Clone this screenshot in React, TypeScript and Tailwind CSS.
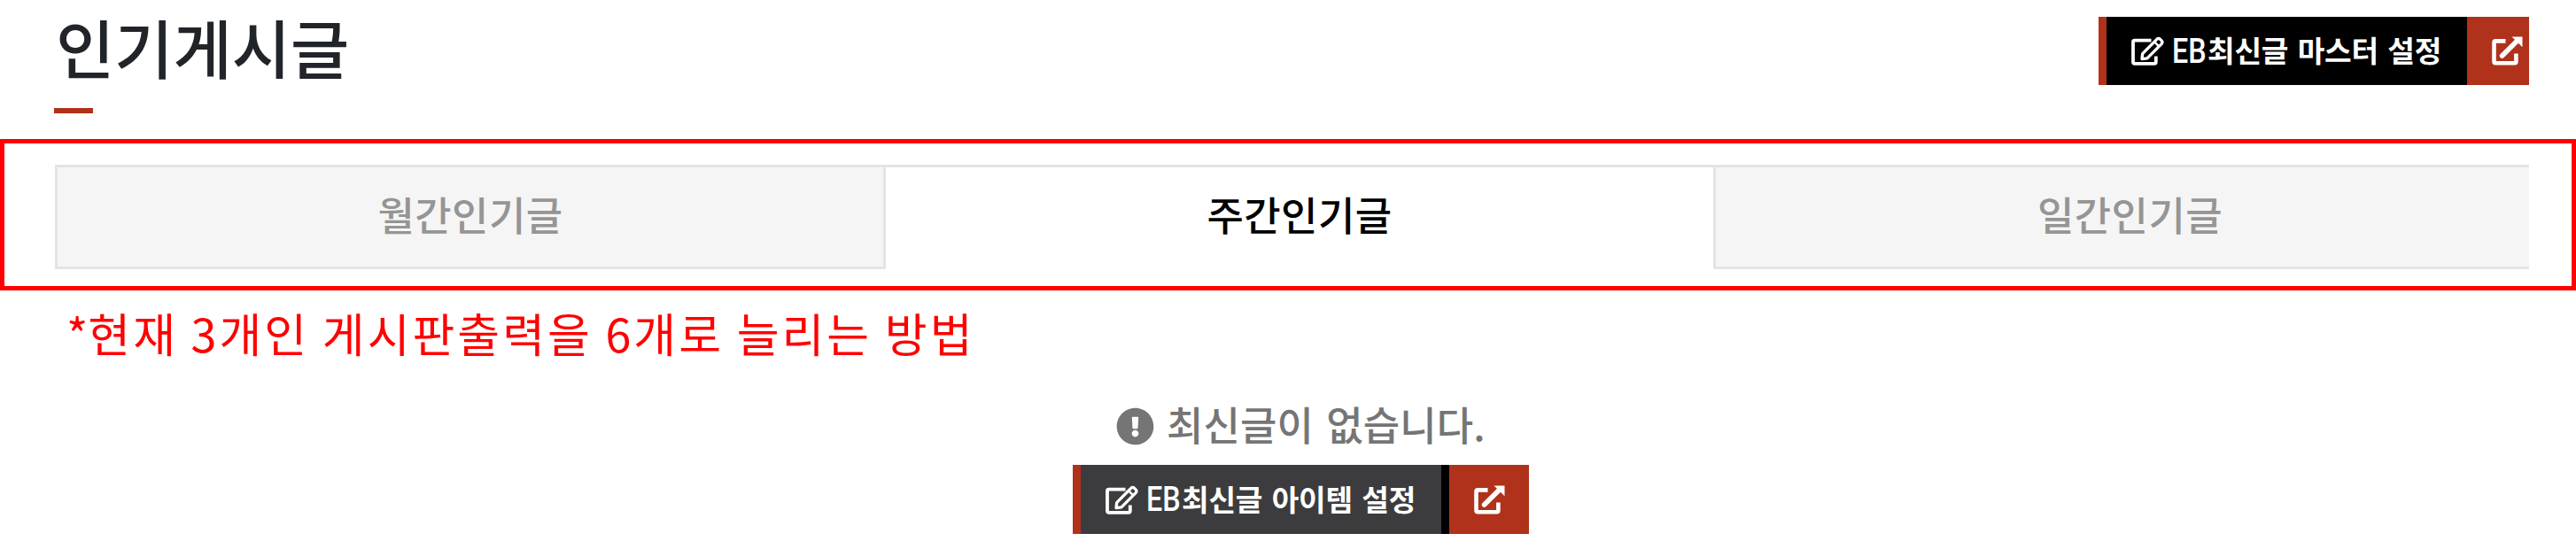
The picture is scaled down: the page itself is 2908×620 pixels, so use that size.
import { FaExclamationCircle } from "react-icons/fa";

const tabs = [
  { label: "월간인기글", active: false },
  { label: "주간인기글", active: true },
  { label: "일간인기글", active: false },
];

function EditIcon() {
  return (
    <svg viewBox="0 0 37 33" className="h-[33px] w-[37px] shrink-0" fill="none" stroke="currentColor" strokeLinejoin="round">
      <path d="M22.5 4.7H3.8Q2 4.7 2 6.500V29Q2 30.800 3.800 30.800H26Q27.800 30.800 27.800 29V22.500" strokeWidth="3.800" />
      <path d="M12 25.600L12.700 19.700L28.800 3.300Q30.700 1.400 32.600 3.300L34.100 4.800Q36 6.700 34.100 8.600L17.900 24.900Z" strokeWidth="3.300" />
      <path d="M26 6.200L31.200 11.400" strokeWidth="2.600" />
    </svg>
  );
}

function ExternalIcon() {
  return (
    <svg viewBox="0 0 35 33" className="h-[33px] w-[35px] shrink-0" fill="none" stroke="currentColor">
      <path d="M15.500 5.400H4.200Q2.500 5.400 2.500 7.100V28.600Q2.500 30.300 4.200 30.300H25.700Q27.400 30.300 27.400 28.600V19.500" strokeWidth="4.600" strokeLinejoin="round" />
      <path d="M11.600 22L28.500 5.200" strokeWidth="5.600" strokeLinecap="round" />
      <path d="M22.500 0.500H34.500V12.200Z" fill="currentColor" stroke="none" />
    </svg>
  );
}

function SettingsLabel({ text }: { text: string }) {
  return (
    <span className="ml-[9px] flex items-center whitespace-nowrap leading-[40px]">
      <span className="w-[40px] origin-left scale-x-[0.85] font-['Roboto',sans-serif] text-[38px] font-medium">EB</span>
      <span className="-mt-[3px] text-[33.3px] font-bold tracking-[-0.2px] [word-spacing:3px]">{text}</span>
    </span>
  );
}

function Tab({ label, active }: { label: string; active: boolean }) {
  return (
    <button
      className={
        active
          ? "h-[118px] w-[934px] shrink-0 border-t-[3px] border-[#e4e4e4] bg-white pb-[10px] text-[45px] font-medium leading-none tracking-[0.4px] text-black"
          : "h-[118px] w-[938px] shrink-0 border-[3px] border-[#e4e4e4] bg-[#f5f5f5] pb-[7px] text-[45px] font-medium leading-none tracking-[0.4px] text-[#959595] last:pl-[3px]"
      }
    >
      {label}
    </button>
  );
}

export default function App() {
  return (
    <main className="flex h-[620px] w-[2908px] flex-col overflow-hidden bg-white font-['Noto_Sans_CJK_KR',sans-serif]">
      <header className="flex h-[157px] shrink-0 items-start justify-between pl-[61px] pr-[53px]">
        <div className="flex flex-col">
          <h1 className="ml-[2px] mt-[12px] h-[110px] text-[72px] font-medium leading-[80px] text-[#212529]">
            인기게시글
          </h1>
          <div className="h-[6px] w-[44px] bg-[#b0321a]" />
        </div>
        <div className="mt-[19px] flex h-[77px] w-[486px] overflow-hidden text-white">
          <a className="flex h-full w-[416px] shrink-0 items-center border-l-[9px] border-[#b0321a] bg-black pl-[28px]">
            <EditIcon />
            <SettingsLabel text="최신글 마스터 설정" />
          </a>
          <a className="flex h-full w-[90px] shrink-0 items-center bg-[#b0321a] pl-[28px]">
            <ExternalIcon />
          </a>
        </div>
      </header>

      <section className="flex h-[171px] shrink-0 border-[5px] border-[#ff0000] pl-[57px] pr-[48px] pt-[24px]">
        <nav className="flex w-full overflow-hidden">
          {tabs.map((t) => (
            <Tab key={t.label} label={t.label} active={t.active} />
          ))}
        </nav>
      </section>

      <p className="mt-[18px] h-[60px] shrink-0 whitespace-nowrap pl-[75px] text-[52px] leading-[60px] tracking-[3px] text-[#ff0000]">
        <span className="tracking-[0px]">*</span>현재 3개인 게시판출력을 6개로 늘리는 방법
      </p>

      <div className="mt-[50px] flex h-[50px] shrink-0 items-center pl-[1260px] text-[#757575]">
        <FaExclamationCircle className="size-[43px]" />
        <span className="-mt-[4px] ml-[14px] whitespace-nowrap text-[45px] font-medium leading-[50px] tracking-[0.1px] [word-spacing:4px]">최신글이 없습니다.</span>
      </div>

      <div className="ml-[1211px] mt-[19px] flex h-[78px] w-[515px] shrink-0 text-white">
        <a className="flex h-full w-[416px] shrink-0 items-center border-l-[9px] border-[#b0321a] bg-[#3c3c3e] pl-[28px]">
          <EditIcon />
          <SettingsLabel text="최신글 아이템 설정" />
        </a>
        <a className="flex h-full w-[99px] shrink-0 items-center border-l-[9px] border-black bg-[#b0321a] pl-[28px]">
          <ExternalIcon />
        </a>
      </div>
    </main>
  );
}
